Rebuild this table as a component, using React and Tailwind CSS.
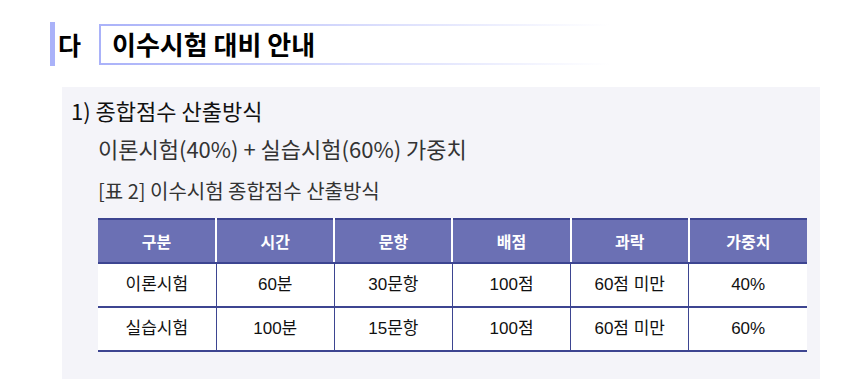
const headers = ["구분", "시간", "문항", "배점", "과락", "가중치"];
const rows = [
  ["이론시험", "60분", "30문항", "100점", "60점 미만", "40%"],
  ["실습시험", "100분", "15문항", "100점", "60점 미만", "60%"],
];

const kr = "font-['Noto_Sans_CJK_KR','Noto_Sans',sans-serif]";
const cell = "font-['Liberation_Sans','Noto_Sans_CJK_KR',sans-serif]";

export default function App() {
  return (
    <div className={`w-[856px] h-[379px] bg-white overflow-hidden ${kr}`}>
      <div className="flex items-center pt-[22px] pl-[50px]">
        <div className="w-[5px] h-[44px] bg-[#aab2f9]" />
        <span className="ml-[3px] w-[24px] text-[25px] font-bold leading-none text-black">다</span>
        <div className="ml-[17px] h-[41px] w-[510px] flex items-center border-y-2 border-l-2 [border-image:linear-gradient(to_right,#aab2f9,#dfe2fd_60%,#ffffff)_1]">
          <span className="pl-[11px] text-[26px] font-bold leading-none text-black">이수시험 대비 안내</span>
        </div>
      </div>

      <div className="mt-[21px] ml-[62px] w-[758px] h-[300px] bg-[#f4f4f9] pt-[8px]">
        <p className="pl-[9px] text-[22px] leading-[30px] text-[#111]">1) 종합점수 산출방식</p>
        <p className="pl-[36px] mt-[8px] text-[22px] leading-[30px] text-[#333]">이론시험(40%) + 실습시험(60%) 가중치</p>
        <p className="pl-[36px] mt-[15px] text-[20px] leading-[26px] text-[#333]">[표 2] 이수시험 종합점수 산출방식</p>

        <table className={`ml-[36px] mt-[14px] w-[709px] table-fixed border-collapse ${cell}`}>
          <thead>
            <tr className="bg-[#6b70b4] h-[44px]">
              {headers.map((h, i) => (
                <th
                  key={h}
                  className={`text-[16px] font-bold text-white border-t-2 border-b-2 border-[#3d4591] ${kr} ${i < 5 ? "border-r-2 border-r-white" : ""}`}
                >
                  {h}
                </th>
              ))}
            </tr>
          </thead>
          <tbody>
            {rows.map((r) => (
              <tr key={r[0]} className="bg-white h-[44px]">
                {r.map((c, i) => (
                  <td
                    key={i}
                    className={`text-center text-[17px] text-[#111] border-b-2 border-[#3d4591] ${i < 5 ? "border-r" : ""}`}
                  >
                    {c}
                  </td>
                ))}
              </tr>
            ))}
          </tbody>
        </table>
      </div>
    </div>
  );
}
